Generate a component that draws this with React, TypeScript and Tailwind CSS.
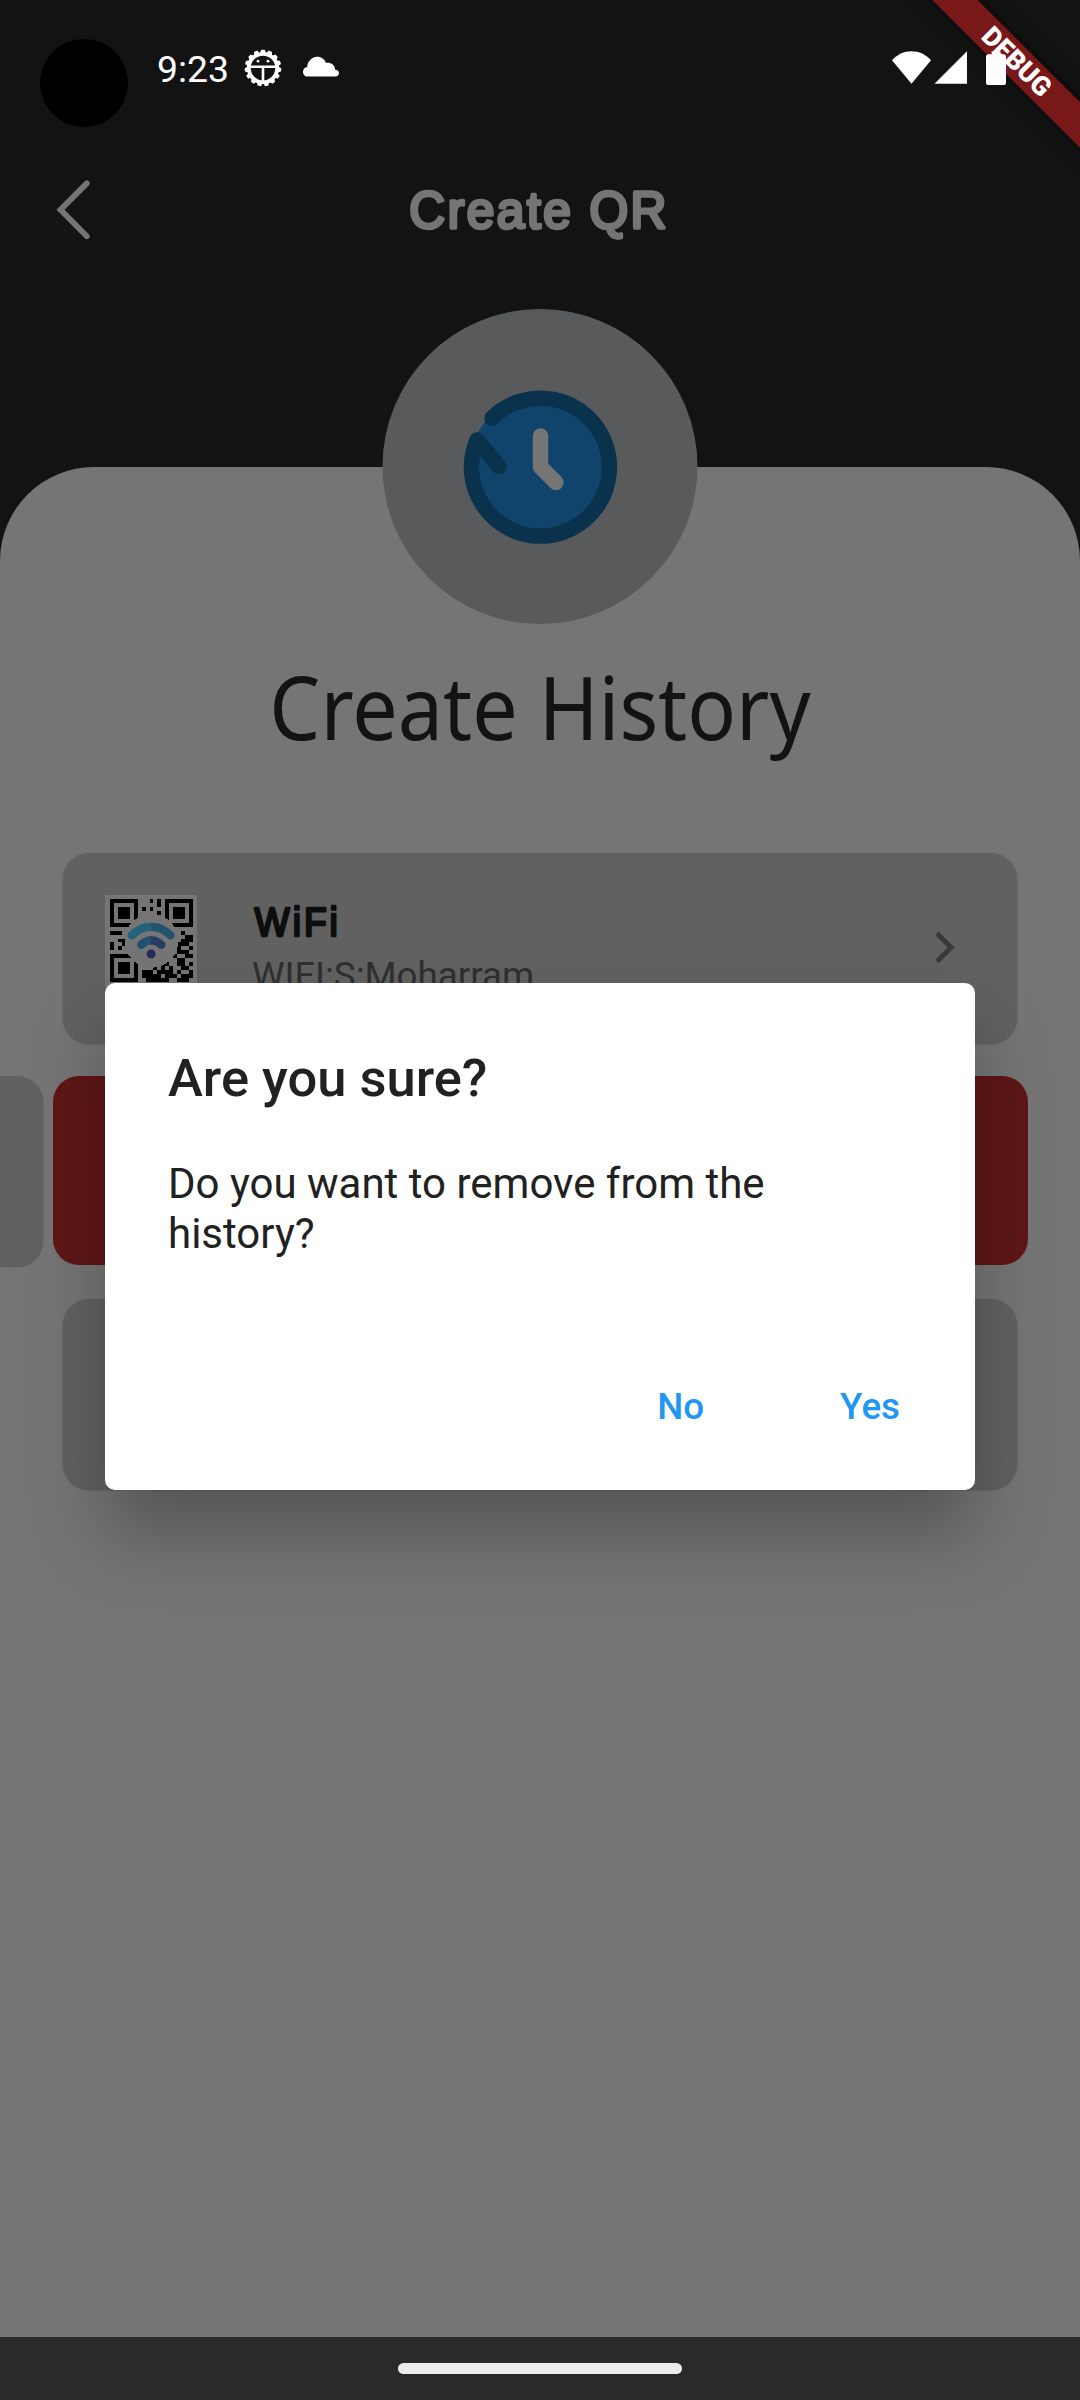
const RING = '#0a324c';

function GearIcon() {
  const teeth = Array.from({ length: 15 }, (_, i) => 12 + i * 24);
  return (
    <svg width="38" height="38" viewBox="-19 -19 38 38">
      {teeth.map((a) => (
        <path key={a} d="M-3.3 14 L-1.7 18.3 L1.7 18.3 L3.3 14Z" fill="#fff" transform={`rotate(${a})`} />
      ))}
      <circle r="14.200" fill="none" stroke="#fff" strokeWidth="3.800" />
      <path d="M-13 -1.300H13M0 -1.300V14" stroke="#fff" strokeWidth="2.600" />
      <circle cx="-5" cy="-6.800" r="1.400" fill="#fff" />
      <circle cx="5" cy="-6.800" r="1.400" fill="#fff" />
    </svg>
  );
}

function StatusBar() {
  return (
    <div className="relative z-20 flex h-[136px] w-full">
      <div className="mt-[39px] ml-[40px] h-[88px] w-[88px] rounded-full bg-black" />
      <div className="mt-[47px] ml-[29px] w-[73px] font-['Roboto'] text-[37.3px] leading-[45px] whitespace-nowrap text-white">
        9:23
      </div>
      <div className="mt-[49px] ml-[14px]">
        <GearIcon />
      </div>
      <svg className="mt-[56px] ml-[21px]" width="36" height="21" viewBox="0 0 36 21" fill="#fff">
        <path d="M4.500 20.600C2 20.600 0 18.400 0 15.700C0 13.200 1.800 11.200 4.200 10.900C4.600 5.200 9 .8 14.200 .8C18.400 .8 21.500 3.100 23 7C27.800 6.200 31.700 9 32.200 13.700C34.400 13.900 36 15.200 36 17.100C36 19 34.600 20.600 32.500 20.600Z" />
      </svg>
      <div className="mt-[50px] ml-auto flex pr-[74px]">
        <svg width="39" height="36" viewBox="0 0 39 36" fill="#fff">
          <path d="M19.500 33.800L0 10.200C5 4.500 12 1.200 19.500 1.200S34 4.500 39 10.200Z" />
        </svg>
        <svg className="ml-[3px]" width="33" height="36" viewBox="0 0 33 36" fill="#fff">
          <path d="M.5 33.800L33 1.300V33.800Z" />
        </svg>
        <svg className="ml-[19px]" width="20" height="36" viewBox="0 0 20 36" fill="#fff">
          <path d="M5.600 1.300H14.400V4.200H17.500A2.500 2.500 0 0 1 20 6.700V33A2 2 0 0 1 18 35H2A2 2 0 0 1 0 33V6.700A2.500 2.500 0 0 1 2.500 4.200H5.600Z" />
        </svg>
      </div>
    </div>
  );
}

function AppBar() {
  return (
    <div className="flex h-[147px] items-center">
      <svg className="ml-[53px]" width="40" height="64" viewBox="0 0 40 64" fill="none">
        <path d="M33.800 5.400L7.500 31.800L33.800 58.200" stroke="#757575" strokeWidth="5.800" strokeLinecap="round" />
      </svg>
      <svg className="ml-[307px]" width="280" height="64" viewBox="0 0 280 64">
        <text
          x="9.700"
          y="50"
          transform="scale(0.965 1)"
          letterSpacing="2.550"
          fontFamily="Liberation Sans"
          fontSize="51.500"
          fill="#757575"
          stroke="#757575"
          strokeWidth="3.500"
          strokeLinejoin="round"
        >
          Create QR
        </text>
      </svg>
    </div>
  );
}

function HistoryBadge() {
  return (
    <div className="absolute top-[-158px] left-1/2 flex h-[315px] w-[315px] -translate-x-1/2 items-center justify-center rounded-full bg-[#595a5c]">
      <svg width="156" height="156" viewBox="-78 -78 156 156" fill="none" strokeLinecap="round" strokeLinejoin="round">
        <circle r="68" fill="#10446d" />
        <path d="M-64 -61L-48 -48L-63 -28L-80 -30Z" fill="#595a5c" />
        <path d="M-63.500 -27L-49 -49" stroke="#10446d" strokeWidth="7" />
        <path d="M-48.500 -49A69 69 0 1 1 -63.500 -27L-41.500 -.5" stroke={RING} strokeWidth="15.400" />
        <path d="M0 -31V0L15.500 15.500" stroke="#757575" strokeWidth="15.400" />
      </svg>
    </div>
  );
}

const QR_ROWS = [
  '111111100010101111111',
  '100000100000101000001',
  '101110101010001011101',
  '101110100000101011101',
  '101110100000001011101',
  '100000100000001000001',
  '111111100000001111111',
  '000000000000000000000',
  '111000000000000000100',
  '000000000000000000011',
  '001100000000000000111',
  '100100000000000001110',
  '101000000000000001001',
  '000000000000000001110',
  '111111100000000010011',
  '100000100000000001100',
  '101110101000011001101',
  '101110100001010100110',
  '101110101110111101001',
  '100000101111101110111',
  '111111100111111001110',
];

function QrThumb() {
  return (
    <div className="h-[92px] w-[92px] bg-[#757575] pt-[4px] pl-[5px]">
      <svg width="83" height="83" viewBox="0 0 21 21" shapeRendering="crispEdges">
        {QR_ROWS.map((row, y) =>
          row.split('').map((c, x) => (c === '1' ? <rect key={`${x}-${y}`} x={x} y={y} width="1" height="1" fill="#000" /> : null)),
        )}
        <circle cx="10.500" cy="10.600" r="6.800" fill="#757575" />
        <g fill="none" strokeWidth="2.100" strokeLinecap="round" shapeRendering="auto">
          <path d="M15.300 9.200Q13.200 7.050 10.400 7.050" stroke="#23546f" />
          <path d="M5.500 9.200Q7.600 7.050 10.400 7.050" stroke="#22647a" strokeLinecap="butt" />
          <path d="M5.500 9.200L5.600 9.100" stroke="#22647a" />
          <path d="M13 11.600Q11.900 10.450 10.400 10.450" stroke="#283b62" />
          <path d="M7.900 11.600Q9 10.450 10.400 10.450" stroke="#23506f" strokeLinecap="butt" />
          <path d="M7.900 11.600L8 11.500" stroke="#23506f" />
        </g>
        <circle cx="10.400" cy="13.900" r="1.150" fill="#292c5a" shapeRendering="auto" />
      </svg>
    </div>
  );
}

const CARD = 'h-[190px] rounded-[26px] bg-[#616161] shadow-[0_1px_2px_rgba(0,0,0,0.25)]';

function HistoryList() {
  return (
    <div className="mt-[386px] flex flex-col gap-[33px]">
      <div className={`mx-[63px] flex items-start ${CARD}`}>
        <div className="mt-[42px] ml-[42px]">
          <QrThumb />
        </div>
        <div className="mt-[45px] ml-[52px] flex flex-col">
          <svg width="100" height="46" viewBox="0 0 100 46">
            <text
              x="6"
              y="37.700"
              transform="scale(0.93 1)"
              letterSpacing="3.200"
              fontFamily="Liberation Sans"
              fontSize="40"
              fill="#0d0d0d"
              stroke="#0d0d0d"
              strokeWidth="2.600"
              strokeLinejoin="round"
            >
              WiFi
            </text>
          </svg>
          <span className="mt-[10px] ml-[3px] font-['Roboto'] text-[36.75px] leading-[44px] text-[#2f2f2f]">WIFI:S:Moharram</span>
        </div>
        <svg className="mt-[76px] mr-[60px] ml-auto" width="24" height="38" viewBox="0 0 24 38" fill="none">
          <path d="M4 4.500L18 18.500L4 32.500" stroke="#393939" strokeWidth="5" />
        </svg>
      </div>
      <div className="flex h-[190px] gap-[10px]">
        <div className={`w-[43px] rounded-l-none ${CARD}`} />
        <div className="h-[189px] w-[975px] rounded-[26px] bg-[#5e1616]" />
      </div>
      <div className={`mx-[63px] ${CARD}`} />
    </div>
  );
}

function ConfirmDialog() {
  return (
    <div className="absolute inset-0 z-10 flex items-start justify-center pt-[983px]">
      <div className="flex h-[507px] w-[870px] flex-col rounded-[10px] bg-white px-[63px] font-['Roboto'] text-[#212121] shadow-[0_45px_75px_rgba(0,0,0,0.27)]">
        <h2 className="mt-[64px] text-[52.5px] leading-[62px] font-medium">Are you sure?</h2>
        <p className="mt-[50px] w-[744px] text-[42px] leading-[50px]">
          Do you want to remove from the
          <br />
          history?
        </p>
        <div className="mt-[126px] flex justify-end text-[36.75px] leading-[44px] font-medium text-[#2196f3]">
          <span className="mr-[136px]">No</span>
          <span className="mr-[12px]">Yes</span>
        </div>
      </div>
    </div>
  );
}

function DebugBanner() {
  return (
    <div className="pointer-events-none absolute top-0 right-0 h-[200px] w-[200px] overflow-hidden">
      <div className="absolute top-[45px] left-[-14px] flex h-[32px] w-[300px] rotate-45 items-center justify-center bg-[#791818] pl-[2px] font-['Roboto'] text-[26.8px] leading-none font-black text-white shadow-[0_0_16px_rgba(0,0,0,0.5)]">
        DEBUG
      </div>
    </div>
  );
}

export default function App() {
  return (
    <div className="relative flex h-[2400px] w-[1080px] flex-col overflow-hidden bg-[#131313]">
      <StatusBar />
      <AppBar />
      <main className="relative mt-[184px] flex h-[1870px] flex-col rounded-t-[94px] bg-[#757575]">
        <HistoryBadge />
        <h1 className="absolute top-[180px] left-1/2 -translate-x-1/2 scale-x-[0.923] font-['Noto_Sans'] text-[87.5px] leading-[119px] whitespace-nowrap text-[#131313]">
          Create History
        </h1>
        <HistoryList />
      </main>
      <div className="flex h-[63px] items-start justify-center bg-[#2a2a2a] pt-[26px]">
        <div className="h-[11px] w-[284px] rounded-full bg-[#ededed]" />
      </div>
      <ConfirmDialog />
      <DebugBanner />
    </div>
  );
}
